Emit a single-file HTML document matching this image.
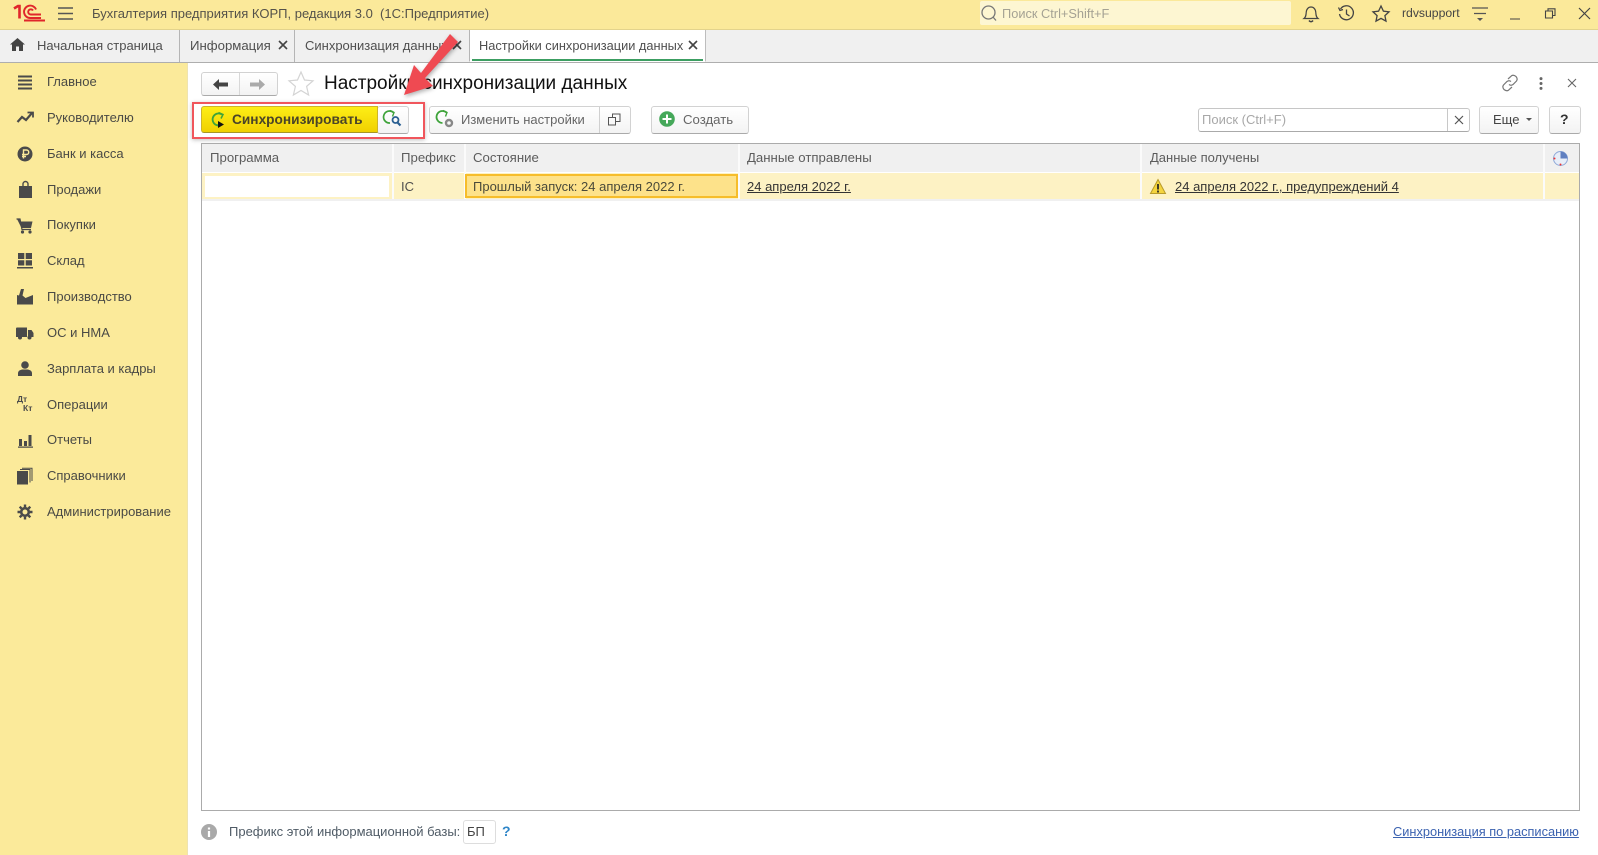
<!DOCTYPE html>
<html lang="ru"><head><meta charset="utf-8"><title>Настройки синхронизации данных</title>
<style>
html,body{margin:0;padding:0;width:1598px;height:855px;overflow:hidden;background:#fff;font-family:"Liberation Sans","Noto Sans CJK SC",sans-serif;color:#4a4a4a}
#w{position:absolute;left:0;top:0;width:1598px;height:855px;overflow:hidden;filter:blur(.35px)}
.a{position:absolute}
.t{position:absolute;white-space:pre;font-size:13px;line-height:18px;color:#4f4f4f}
.side{color:#4a4a45}
.btn{position:absolute;top:106px;height:26px;background:linear-gradient(#fff,#f3f3f3);border:1px solid #d2d2d2;border-bottom:1px solid #aaa;border-radius:3px;box-sizing:content-box}
svg{position:absolute;overflow:visible}
.h{background:#f0f0f0}
</style></head><body><div id="w">
<!-- top bar -->
<div class="a" style="left:0;top:0;width:1598px;height:29px;background:#fbe99a;border-bottom:1px solid #e3d38c"></div>
<svg style="left:13px;top:4px" width="32" height="18" viewBox="0 0 32 18" fill="none" stroke="#e0262b" stroke-width="1.9">
<path d="M1 4.5 L5 2 H6.5 V14.5" stroke-width="2.6"/>
<path d="M28 14 H17.5 A6.2 6.2 0 1 1 23 5.5"/>
<path d="M28 10.5 H18 A2.6 2.6 0 1 1 20 6.5"/>
<path d="M11 16.5 H32"/>
</svg>
<svg style="left:58px;top:7px" width="15" height="13" stroke="#555" stroke-width="1.4"><path d="M0 1H15M0 6.5H15M0 12H15"/></svg>
<div class="t" style="left:92px;top:5px;color:#55524a">Бухгалтерия предприятия КОРП, редакция 3.0  (1С:Предприятие)</div>
<div class="a" style="left:980px;top:1px;width:311px;height:24px;background:#fdf6d2;border-radius:2px"></div>
<svg style="left:981px;top:5px" width="17" height="17" fill="none" stroke="#777" stroke-width="1.3"><circle cx="7.5" cy="7.5" r="6.5"/><path d="M12 12L15 15.5"/></svg>
<div class="t" style="left:1002px;top:5px;font-size:12.8px;color:#a5a294">Поиск Ctrl+Shift+F</div>
<svg style="left:1303px;top:5px" width="16" height="18" fill="none" stroke="#444" stroke-width="1.2"><path d="M1 13.5C3 12 3 10 3.2 7.5C3.4 4 5.5 2 8 2C10.5 2 12.6 4 12.8 7.5C13 10 13 12 15 13.5Z"/><path d="M6 15.5Q8 18 10 15.5" stroke-width="1.6"/></svg>
<svg style="left:1338px;top:5px" width="17" height="17" fill="none" stroke="#444" stroke-width="1.3"><path d="M2.5 4A7 7 0 1 1 1.5 9"/><path d="M0.5 2.5L2 5.5L5 4.5" /><path d="M8.5 4.5V9L11.5 11"/></svg>
<svg style="left:1372px;top:5px" width="18" height="17" viewBox="0 0 18 17" fill="none" stroke="#444" stroke-width="1.3"><path d="M9 1L11.4 6.2L17 6.9L12.9 10.6L14 16.1L9 13.4L4 16.1L5.1 10.6L1 6.9L6.6 6.2Z"/></svg>
<div class="t" style="left:1402px;top:4px;font-size:12.2px;color:#444">rdvsupport</div>
<svg style="left:1472px;top:7px" width="16" height="15" stroke="#555" stroke-width="1.3" fill="#555"><path d="M0 1H16M2 6.5H14"/><path d="M5 11H11L8 14Z" stroke="none"/></svg>
<svg style="left:1510px;top:18px" width="10" height="2" stroke="#444"><path d="M0 1H10"/></svg>
<svg style="left:1545px;top:8px" width="11" height="11" fill="none" stroke="#444" stroke-width="1.1"><path d="M0.5 3H7.5V10H0.5ZM3 3V0.8H10V7.5H7.5"/></svg>
<svg style="left:1579px;top:8px" width="11" height="11" stroke="#444" stroke-width="1.2"><path d="M0 0L11 11M11 0L0 11"/></svg>

<!-- tabs -->
<div class="a h" style="left:0;top:30px;width:1598px;height:32px;border-bottom:1px solid #aeaeae"></div>
<svg style="left:10px;top:38px" width="15" height="13" fill="#444"><path d="M7.5 0L15 6.5H13V13H9V8.5H6V13H2V6.5H0Z"/></svg>
<div class="t" style="left:37px;top:37px">Начальная страница</div>
<div class="a" style="left:179px;top:30px;width:1px;height:32px;background:#b5b5b5"></div>
<div class="t" style="left:190px;top:37px;font-size:13.2px">Информация</div>
<svg style="left:279px;top:41px" width="8" height="8" stroke="#444" stroke-width="1.6"><path d="M0 0L8 8M8 0L0 8"/></svg>
<div class="a" style="left:294px;top:30px;width:1px;height:32px;background:#b5b5b5"></div>
<div class="t" style="left:305px;top:37px">Синхронизация данных</div>
<svg style="left:453px;top:41px" width="8" height="8" stroke="#444" stroke-width="1.6"><path d="M0 0L8 8M8 0L0 8"/></svg>
<div class="a" style="left:469px;top:30px;width:237px;height:32px;background:#fff;border-left:1px solid #b5b5b5;border-right:1px solid #bdbdbd;box-sizing:border-box;border-bottom:1px solid #fff"></div>
<div class="a" style="left:472px;top:59px;width:231px;height:2px;background:#3c9e62"></div>
<div class="t" style="left:479px;top:37px;font-size:12.8px">Настройки синхронизации данных</div>
<svg style="left:689px;top:41px" width="8" height="8" stroke="#444" stroke-width="1.6"><path d="M0 0L8 8M8 0L0 8"/></svg>

<!-- sidebar -->
<div class="a" style="left:0;top:63px;width:188px;height:792px;background:#fbea9a;border-right:1px solid #eee3b0;box-sizing:border-box"></div>
<div class="t side" style="left:47px;top:73px">Главное</div>
<div class="t side" style="left:47px;top:109px">Руководителю</div>
<div class="t side" style="left:47px;top:145px">Банк и касса</div>
<div class="t side" style="left:47px;top:181px">Продажи</div>
<div class="t side" style="left:47px;top:216px">Покупки</div>
<div class="t side" style="left:47px;top:252px">Склад</div>
<div class="t side" style="left:47px;top:288px">Производство</div>
<div class="t side" style="left:47px;top:324px">ОС и НМА</div>
<div class="t side" style="left:47px;top:360px">Зарплата и кадры</div>
<div class="t side" style="left:47px;top:396px">Операции</div>
<div class="t side" style="left:47px;top:431px">Отчеты</div>
<div class="t side" style="left:47px;top:467px">Справочники</div>
<div class="t side" style="left:47px;top:503px">Администрирование</div>
<svg style="left:17px;top:75px" width="16" height="15" stroke="#4a4a4a" stroke-width="2"><path d="M1 1.5H15M1 5.5H15M1 9.5H15M1 13.5H15"/></svg>
<svg style="left:17px;top:111px" width="17" height="13" fill="none" stroke="#4a4a4a" stroke-width="2.2"><path d="M0.5 11L5 6L9 9L15 2"/><path d="M10.5 1.5H16V6.5" stroke-width="1.8"/></svg>
<svg style="left:17px;top:146px" width="16" height="16"><circle cx="8" cy="8" r="7.5" fill="#4a4a4a"/><path d="M6.5 12.5V4H9.5A2.2 2.2 0 0 1 9.5 8.5H5M5 10.5H9" fill="none" stroke="#fbea9a" stroke-width="1.4"/></svg>
<svg style="left:19px;top:181px" width="14" height="17" fill="#4a4a4a"><path d="M0 5H13V17H0Z"/><path d="M4 6V3A2.5 2.5 0 0 1 9 3V6" fill="none" stroke="#4a4a4a" stroke-width="1.4"/></svg>
<svg style="left:16px;top:218px" width="17" height="16" fill="#4a4a4a"><path d="M1 1H4L5 3.5H16.5L15 10H5.5Z"/><path d="M0.5 1H4L6 11.5H15" fill="none" stroke="#4a4a4a" stroke-width="1.2"/><circle cx="6.5" cy="14" r="1.6"/><circle cx="14" cy="14" r="1.6"/></svg>
<svg style="left:17px;top:253px" width="16" height="16" fill="#4a4a4a"><path d="M1 0H7.3V6H1ZM8.7 0H15V6H8.7ZM1 7.3H7.3V12.5H1ZM8.7 7.3H15V12.5H8.7ZM0 14H16V15.5H0Z"/></svg>
<svg style="left:17px;top:289px" width="16" height="16" fill="#4a4a4a"><path d="M0 15.5V6L2 6.5L4 0H7L5.5 6.5L8.5 9L16 6V15.5Z"/></svg>
<svg style="left:16px;top:327px" width="18" height="13" fill="#4a4a4a"><path d="M0 1.5Q0 0.5 1 0.5H11V10H0Z"/><path d="M12 3H15.5L17.5 6V10H12Z"/><circle cx="4" cy="10.5" r="2"/><circle cx="13.5" cy="10.5" r="2"/></svg>
<svg style="left:18px;top:361px" width="14" height="15" fill="#4a4a4a"><circle cx="7" cy="4" r="3.8"/><path d="M0 15V12Q0 9.5 4 8.5H10Q14 9.5 14 12V15Z"/></svg>
<div class="t" style="left:17px;top:395px;font-size:8.5px;line-height:9px;font-weight:bold;color:#4a4a4a">Дт</div>
<div class="t" style="left:23px;top:404px;font-size:8.5px;line-height:9px;font-weight:bold;color:#4a4a4a">Кт</div>
<svg style="left:17px;top:434px" width="16" height="14" fill="#4a4a4a"><path d="M2 5H5V12H2ZM7 7H10V12H7ZM11.5 1H14.5V12H11.5ZM1 12.5H16V13.7H1Z"/></svg>
<svg style="left:17px;top:468px" width="16" height="17" fill="#4a4a4a"><path d="M0 3H11V16.5H0Z"/><path d="M3 1.5H13V14.5M5 0.3H15V13" fill="none" stroke="#4a4a4a" stroke-width="1"/></svg>
<svg style="left:17px;top:504px" width="16" height="16" fill="none" stroke="#4a4a4a"><circle cx="8" cy="8" r="3.8" stroke-width="2.6"/><path d="M8 0.5V3M8 13V15.5M0.5 8H3M13 8H15.5M2.7 2.7L4.5 4.5M11.5 11.5L13.3 13.3M13.3 2.7L11.5 4.5M4.5 11.5L2.7 13.3" stroke-width="2.4"/></svg>

<!-- nav -->
<div class="btn" style="left:201px;top:72px;width:75px;height:22px"></div>
<div class="a" style="left:239px;top:73px;width:1px;height:22px;background:#d8d8d8"></div>
<svg style="left:213px;top:79px" width="15" height="11" fill="#444"><path d="M0 5.5L6 0V3.5H15V7.5H6V11Z"/></svg>
<svg style="left:250px;top:79px" width="15" height="11" fill="#aaa"><path d="M15 5.5L9 0V3.5H0V7.5H9V11Z"/></svg>
<svg style="left:288px;top:71px" width="26" height="25" viewBox="0 0 26 25" fill="#fff" stroke="#d4d4d4" stroke-width="1.2"><path d="M13 1L16.5 9L25 9.8L18.6 15.4L20.6 24L13 19.5L5.4 24L7.4 15.4L1 9.8L9.5 9Z"/></svg>
<div class="t" style="left:324px;top:72px;font-size:19px;line-height:24px;color:#111">Настройки синхронизации данных</div>
<svg style="left:1501px;top:74px" width="18" height="18" fill="none" stroke="#777" stroke-width="1.2"><path d="M7 5L10.5 1.8Q12.5 0.5 15 2.5Q17 5 15.5 7L12 10.5Q10 12 8 10.5"/><path d="M11 13L7.5 16.2Q5.5 17.5 3 15.5Q1 13 2.5 11L6 7.5Q8 6 10 7.5"/></svg>
<svg style="left:1539px;top:77px" width="4" height="13" fill="#666"><circle cx="2" cy="1.6" r="1.5"/><circle cx="2" cy="6.5" r="1.5"/><circle cx="2" cy="11.4" r="1.5"/></svg>
<svg style="left:1568px;top:79px" width="8" height="8" stroke="#666" stroke-width="1.1"><path d="M0 0L8 8M8 0L0 8"/></svg>

<!-- commands -->
<div class="a" style="left:192px;top:102px;width:233px;height:37px;border:2px solid #f0565c;box-sizing:border-box;box-shadow:0 1px 4px rgba(0,0,0,.25)"></div>
<div class="btn" style="left:377px;width:30px"></div>
<div class="a" style="left:201px;top:106px;width:177px;height:27px;background:linear-gradient(#fdee16,#f0d000);border:1px solid #cdb52a;border-bottom:1px solid #a59526;box-sizing:border-box;border-radius:3px 0 0 3px"></div>
<svg style="left:210px;top:111px" width="19" height="18" fill="none" stroke="#3ea33a" stroke-width="1.8"><path d="M12 3.5A6 6 0 1 0 12.5 13"/><path d="M8.5 1.5L13 3.5L11 7.5" stroke-width="1.5"/><path d="M8 10L14 13.5L8 17Z" fill="#111" stroke="none"/></svg>
<div class="t" style="left:232px;top:111px;font-size:13.7px;font-weight:bold;color:#4a4428">Синхронизировать</div>
<svg style="left:383px;top:110px" width="20" height="18" fill="none" stroke="#3ea33a" stroke-width="1.7"><path d="M10.5 2.5A6 6 0 1 0 7 13"/><path d="M7 0.5L11 2.5L9.5 6.5" stroke-width="1.4"/><circle cx="12.5" cy="10" r="3" stroke="#2a5f92" stroke-width="1.8"/><path d="M14.5 12.5L17.5 15.5" stroke="#2a5f92" stroke-width="2.2"/></svg>

<div class="btn" style="left:429px;width:200px"></div>
<div class="a" style="left:599px;top:107px;width:1px;height:26px;background:#d0d0d0"></div>
<svg style="left:436px;top:110px" width="20" height="19" fill="none" stroke="#3ea33a" stroke-width="1.8"><path d="M10.5 2.5A6 6 0 1 0 6.5 13"/><path d="M7 0.5L11 2.5L9.5 6.5" stroke-width="1.4"/><circle cx="13" cy="13" r="3" stroke="#888" stroke-width="2.4"/></svg>
<div class="t" style="left:461px;top:111px;color:#666">Изменить настройки</div>
<svg style="left:608px;top:113px" width="13" height="13" fill="none" stroke="#555" stroke-width="1"><path d="M0.5 4.5H7.5V12H0.5ZM4.5 4.5V1H12V8.5H7.5"/></svg>

<div class="btn" style="left:651px;width:96px"></div>
<svg style="left:659px;top:111px" width="16" height="16"><circle cx="8" cy="8" r="7.8" fill="#45a85a"/><path d="M8 3.5V12.5M3.5 8H12.5" stroke="#fff" stroke-width="2"/></svg>
<div class="t" style="left:683px;top:111px;font-size:13.2px;color:#666">Создать</div>

<div class="a" style="left:1198px;top:108px;width:272px;height:24px;border:1px solid #c6c6c6;border-bottom:1px solid #aaa;border-radius:3px;box-sizing:border-box;background:#fff"></div>
<div class="a" style="left:1447px;top:109px;width:1px;height:22px;background:#c8c8c8"></div>
<div class="t" style="left:1202px;top:111px;color:#a8a8a8">Поиск (Ctrl+F)</div>
<svg style="left:1455px;top:116px" width="8" height="8" stroke="#555" stroke-width="1.2"><path d="M0 0L8 8M8 0L0 8"/></svg>
<div class="btn" style="left:1479px;width:58px"></div>
<div class="t" style="left:1493px;top:111px;color:#444">Еще</div>
<svg style="left:1526px;top:118px" width="6" height="4" fill="#555"><path d="M0 0H6L3 3Z"/></svg>
<div class="btn" style="left:1549px;width:30px"></div>
<div class="t" style="left:1560px;top:110px;font-size:14px;color:#333;font-weight:bold">?</div>

<!-- table -->
<div class="a" style="left:201px;top:143px;width:1379px;height:668px;border:1px solid #ababab;box-sizing:border-box;background:#fff"></div>
<div class="a h" style="left:202px;top:144px;width:1377px;height:28px"></div>
<div class="a" style="left:202px;top:173px;width:1377px;height:26px;background:#fdf2c4"></div>
<div class="a" style="left:202px;top:199px;width:1377px;height:2px;background:#f0f0f0"></div>
<div class="a" style="left:392px;top:144px;width:2px;height:55px;background:#fbfbfb"></div>
<div class="a" style="left:464px;top:144px;width:2px;height:55px;background:#fbfbfb"></div>
<div class="a" style="left:738px;top:144px;width:2px;height:55px;background:#fbfbfb"></div>
<div class="a" style="left:1140px;top:144px;width:2px;height:55px;background:#fbfbfb"></div>
<div class="a" style="left:1543px;top:144px;width:2px;height:55px;background:#fbfbfb"></div>
<div class="a" style="left:205px;top:176px;width:184px;height:21px;background:#fff"></div>
<div class="a" style="left:465px;top:174px;width:273px;height:24px;background:#fde28a;border:2px solid #f6bd2b;box-sizing:border-box"></div>
<div class="t" style="left:210px;top:149px;font-size:13.2px;color:#5c5c5c">Программа</div>
<div class="t" style="left:401px;top:149px;font-size:13.2px;color:#5c5c5c">Префикс</div>
<div class="t" style="left:473px;top:149px;font-size:13.2px;color:#5c5c5c">Состояние</div>
<div class="t" style="left:747px;top:149px;font-size:13.2px;color:#5c5c5c">Данные отправлены</div>
<div class="t" style="left:1150px;top:149px;font-size:13px;color:#5c5c5c">Данные получены</div>
<svg style="left:1553px;top:151px" width="15" height="15"><circle cx="7.5" cy="7.5" r="7" fill="#e8eef8" stroke="#8fa9d8"/><path d="M7.5 7.5V0.5A7 7 0 0 1 14.5 7.5Z" fill="#5f7fc0"/><circle cx="1.5" cy="7.5" r="1" fill="#e33"/><circle cx="7.5" cy="13.5" r="1" fill="#e33"/></svg>
<div class="t" style="left:401px;top:178px">IC</div>
<div class="t" style="left:473px;top:178px;color:#4a4a3a">Прошлый запуск: 24 апреля 2022 г.</div>
<div class="t" style="left:747px;top:178px;color:#333;text-decoration:underline">24 апреля 2022 г.</div>
<svg style="left:1150px;top:179px" width="16" height="15"><path d="M8 0.5L15.5 14.5H0.5Z" fill="#f4d43e" stroke="#b99b2a"/><path d="M8 5V10.5M8 11.5V13.5" stroke="#222" stroke-width="1.7"/></svg>
<div class="t" style="left:1175px;top:178px;color:#333;text-decoration:underline">24 апреля 2022 г., предупреждений 4</div>

<!-- footer -->
<svg style="left:201px;top:824px" width="16" height="16"><circle cx="8" cy="8" r="8" fill="#a9a9a9"/><path d="M8 3.5V5.5M8 7V13" stroke="#fff" stroke-width="2.2"/></svg>
<div class="t" style="left:229px;top:823px;color:#4f5b66">Префикс этой информационной базы:</div>
<div class="a" style="left:463px;top:820px;width:33px;height:24px;border:1px solid #ddd;border-radius:3px;box-sizing:border-box;background:#fff"></div>
<div class="t" style="left:467px;top:823px;color:#444">БП</div>
<div class="t" style="left:502px;top:822px;font-size:14px;color:#2f86c8;font-weight:bold">?</div>
<div class="t" style="left:1393px;top:823px;font-size:12.8px;color:#3b62b0;text-decoration:underline">Синхронизация по расписанию</div>

<!-- arrow -->
<svg style="left:0;top:0" width="1598" height="855" fill="#ef4a52"><g style="filter:drop-shadow(1px 2px 2px rgba(0,0,0,.3))"><path d="M450 34L458 42L425 78L433 86L404 95L414 65L421 73Z"/></g></svg>
</div></body></html>
